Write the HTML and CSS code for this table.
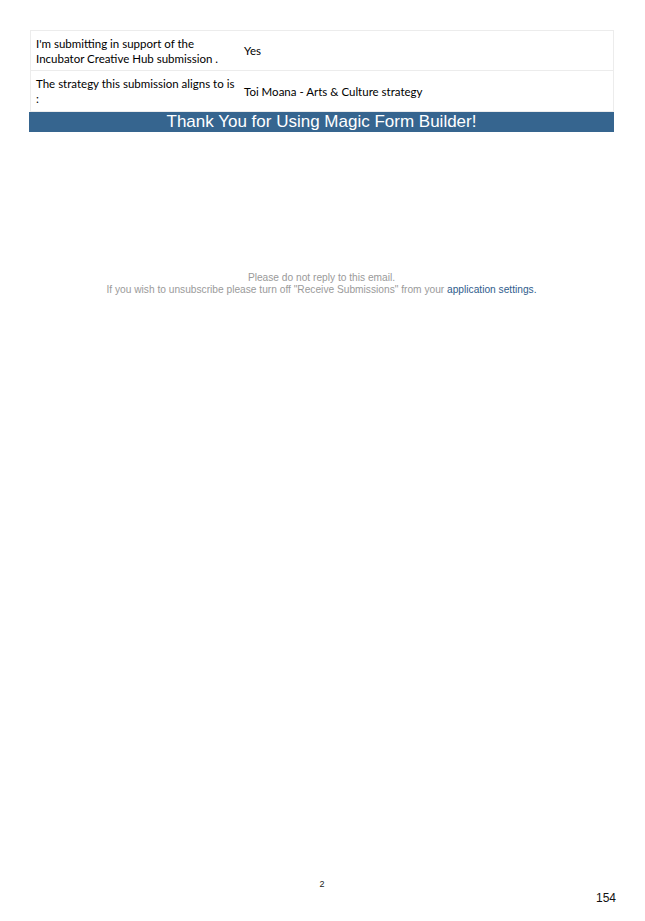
FILE: index.html
```html
<!DOCTYPE html>
<html>
<head>
<meta charset="utf-8">
<link rel="stylesheet" href="styles.css">
</head>
<body>
<div class="page">
  <div class="sub">
    <div class="row row-1">
      <div class="label">I'm submitting in support of the Incubator Creative Hub submission .</div>
      <div class="value">Yes</div>
    </div>
    <div class="row row-2">
      <div class="label">The strategy this submission aligns to is :</div>
      <div class="value">Toi Moana - Arts &amp; Culture strategy</div>
    </div>
  </div>
  <div class="banner">Thank You for Using Magic Form Builder!</div>
  <div class="notice">
    <div>Please do not reply to this email.</div>
    <div>If you wish to unsubscribe please turn off "Receive Submissions" from your <a class="link">application settings.</a></div>
  </div>
  <div class="pagenum">2</div>
  <div class="folio">154</div>
</div>
</body>
</html>
```
FILE: styles.css
```css
html, body {
  margin: 0;
  padding: 0;
  background: #fff;
}
.page {
  width: 645px;
  height: 921px;
  display: flex;
  flex-direction: column;
  padding: 30px 31px 0 29px;
  box-sizing: border-box;
}
.sub {
  margin-left: 1px;
  border-top: 1px solid #ececec;
}
.row {
  display: flex;
  align-items: center;
  border-left: 1px solid #ececec;
  border-right: 1px solid #ececec;
  border-bottom: 1px solid #ececec;
  font-family: "Lato", "Liberation Sans", sans-serif;
  font-size: 11.5px;
  line-height: 15px;
  color: #000;
}
.row-1 { height: 39px; }
.row-2 { height: 40px; }
.label {
  width: 203px;
  padding-left: 5px;
}
.value {
  padding-left: 5px;
}
.banner {
  height: 20px;
  background: #36658f;
  color: #fff;
  font-family: "Liberation Sans", Arial, sans-serif;
  font-size: 17px;
  line-height: 20px;
  text-align: center;
}
.notice {
  margin-top: 140px;
  font-family: "Liberation Sans", Arial, sans-serif;
  font-size: 10.2px;
  line-height: 12px;
  color: #9a9a9a;
  text-align: center;
}
.link {
  color: #2f5d8c;
  text-decoration: none;
}
.pagenum {
  margin-top: auto;
  font-family: "Liberation Sans", Arial, sans-serif;
  font-size: 9px;
  line-height: 11px;
  color: #222;
  text-align: center;
  padding-left: 1px;
}
.folio {
  margin-top: 1px;
  margin-bottom: 16px;
  font-family: "Liberation Sans", Arial, sans-serif;
  font-size: 12px;
  line-height: 14px;
  color: #111;
  text-align: right;
  margin-right: -2px;
}
```
